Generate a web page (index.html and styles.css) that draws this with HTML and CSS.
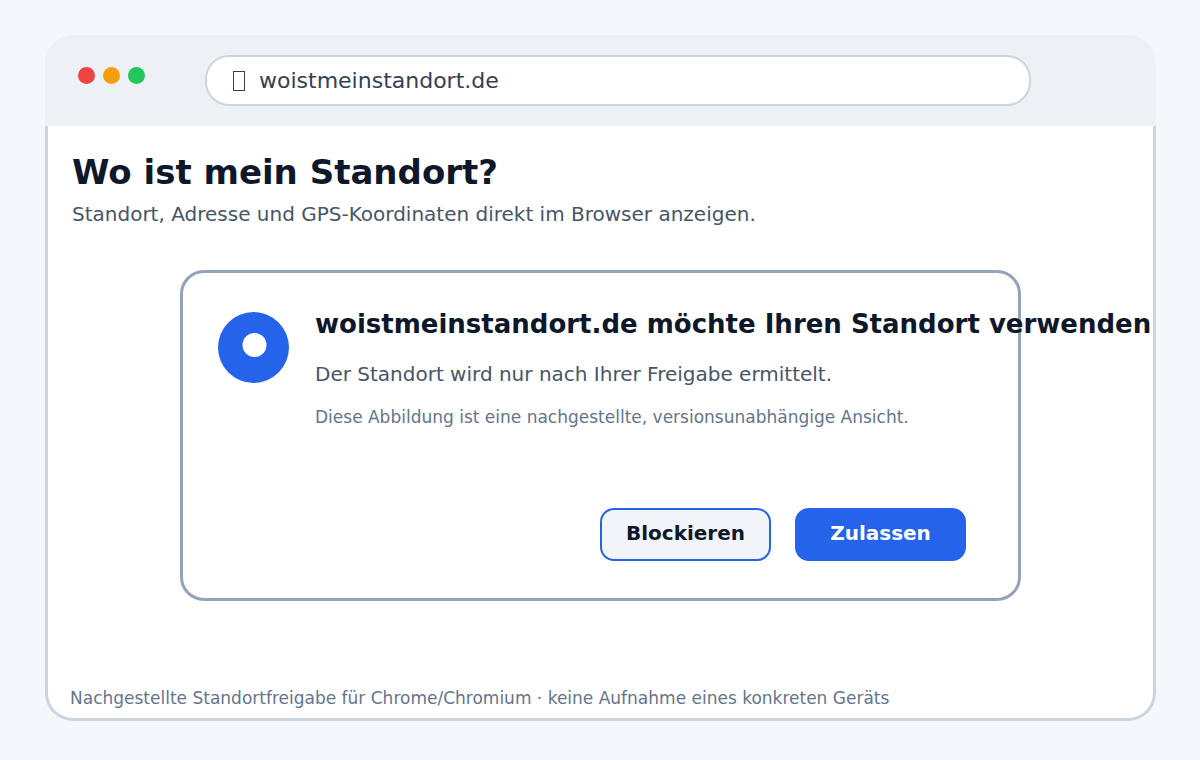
FILE: index.html
```html
<!DOCTYPE html>
<html lang="de">
<head>
<meta charset="utf-8">
<title>Wo ist mein Standort?</title>
<link rel="stylesheet" href="styles.css">
</head>
<body>
<div class="browser">
  <header class="toolbar">
    <div class="lights">
      <span class="light light-red"></span>
      <span class="light light-amber"></span>
      <span class="light light-green"></span>
    </div>
    <div class="address">
      <span class="address-icon"></span>
      <input class="address-input" type="text" value="woistmeinstandort.de" aria-label="Adresse">
    </div>
  </header>
  <main class="page">
    <h1 class="title">Wo ist mein Standort?</h1>
    <p class="subtitle">Standort, Adresse und GPS-Koordinaten direkt im Browser anzeigen.</p>
    <section class="dialog" role="dialog" aria-labelledby="dialog-title">
      <div class="dialog-main">
        <svg class="dialog-icon" viewBox="0 0 71 71" aria-hidden="true">
          <circle cx="35.5" cy="35.5" r="35.5" fill="#2563eb"/>
          <circle cx="36.5" cy="33" r="12" fill="#fff"/>
        </svg>
        <div class="dialog-text">
          <h2 class="dialog-title" id="dialog-title">woistmeinstandort.de möchte Ihren Standort verwenden</h2>
          <p class="dialog-lead">Der Standort wird nur nach Ihrer Freigabe ermittelt.</p>
          <p class="dialog-note">Diese Abbildung ist eine nachgestellte, versionsunabhängige Ansicht.</p>
        </div>
      </div>
      <div class="actions">
        <button class="button button-block" type="button">Blockieren</button>
        <button class="button button-allow" type="button">Zulassen</button>
      </div>
    </section>
    <footer class="caption">Nachgestellte Standortfreigabe für Chrome/Chromium · keine Aufnahme eines konkreten Geräts</footer>
  </main>
</div>
</body>
</html>
```
FILE: styles.css
```css
* {
  box-sizing: border-box;
}

body {
  margin: 0;
  min-height: 100vh;
  display: flex;
  padding: 35px 44px 39px 45px;
  background: #f4f7fc;
  color: #0f172a;
  font-family: "DejaVu Sans", sans-serif;
}

h1,
h2,
p {
  margin: 0;
}

.browser {
  flex: 1;
  min-width: 0;
  display: flex;
  flex-direction: column;
}

.toolbar {
  display: flex;
  align-items: flex-start;
  gap: 60px;
  padding: 20px 125px 20px 33px;
  background: #edf1f6;
  border-radius: 28px 28px 0 0;
}

.lights {
  display: flex;
  gap: 8px;
  padding-top: 12px;
}

.light {
  width: 17px;
  height: 17px;
  border-radius: 50%;
}

.light-red {
  background: #ef4444;
}

.light-amber {
  background: #f59e0b;
}

.light-green {
  background: #22c55e;
}

.address {
  flex: 1;
  display: flex;
  align-items: center;
  gap: 14px;
  height: 51px;
  padding: 0 26px;
  background: #fff;
  border: 2px solid #cbd5e1;
  border-radius: 24px;
}

.address-icon {
  width: 12px;
  height: 20px;
  border: 1px solid #334155;
}

.address-input {
  flex: 1;
  min-width: 0;
  padding: 0;
  border: 0;
  outline: 0;
  background: transparent;
  color: #334155;
  font: 22px "DejaVu Sans", sans-serif;
}

.page {
  flex: 1;
  display: flex;
  flex-direction: column;
  padding: 26px 24px 8px;
  background: #fff;
  border: 3px solid #cbd5e1;
  border-top: 0;
  border-radius: 0 0 28px 28px;
}

.title {
  font-size: 34px;
  line-height: 40px;
}

.subtitle {
  margin-top: 10px;
  color: #475569;
  font-size: 20px;
  line-height: 24px;
}

.dialog {
  margin: 44px 108px 0;
  padding: 36px 52px 37px 35px;
  border: 3px solid #94a3b8;
  border-radius: 24px;
}

.dialog-main {
  display: flex;
  gap: 26px;
}

.dialog-icon {
  flex: none;
  width: 71px;
  height: 71px;
  margin-top: 3px;
}

.dialog-text {
  min-width: 0;
}

.dialog-title {
  font-size: 26px;
  line-height: 30px;
  white-space: nowrap;
}

.dialog-lead {
  margin-top: 23px;
  color: #475569;
  font-size: 20px;
  line-height: 24px;
}

.dialog-note {
  margin-top: 19px;
  color: #64748b;
  font-size: 17px;
  line-height: 24px;
}

.actions {
  display: flex;
  justify-content: flex-end;
  gap: 24px;
  margin-top: 79px;
}

.button {
  width: 171px;
  height: 53px;
  padding: 0 0 4px;
  border: 2px solid #2563eb;
  border-radius: 14px;
  font: bold 20px "DejaVu Sans", sans-serif;
}

.button-block {
  background: #f1f5f9;
  color: #0f172a;
}

.button-allow {
  background: #2563eb;
  color: #fff;
}

.caption {
  margin-top: auto;
  margin-left: -2px;
  color: #64748b;
  font-size: 17px;
  line-height: 24px;
}
```
